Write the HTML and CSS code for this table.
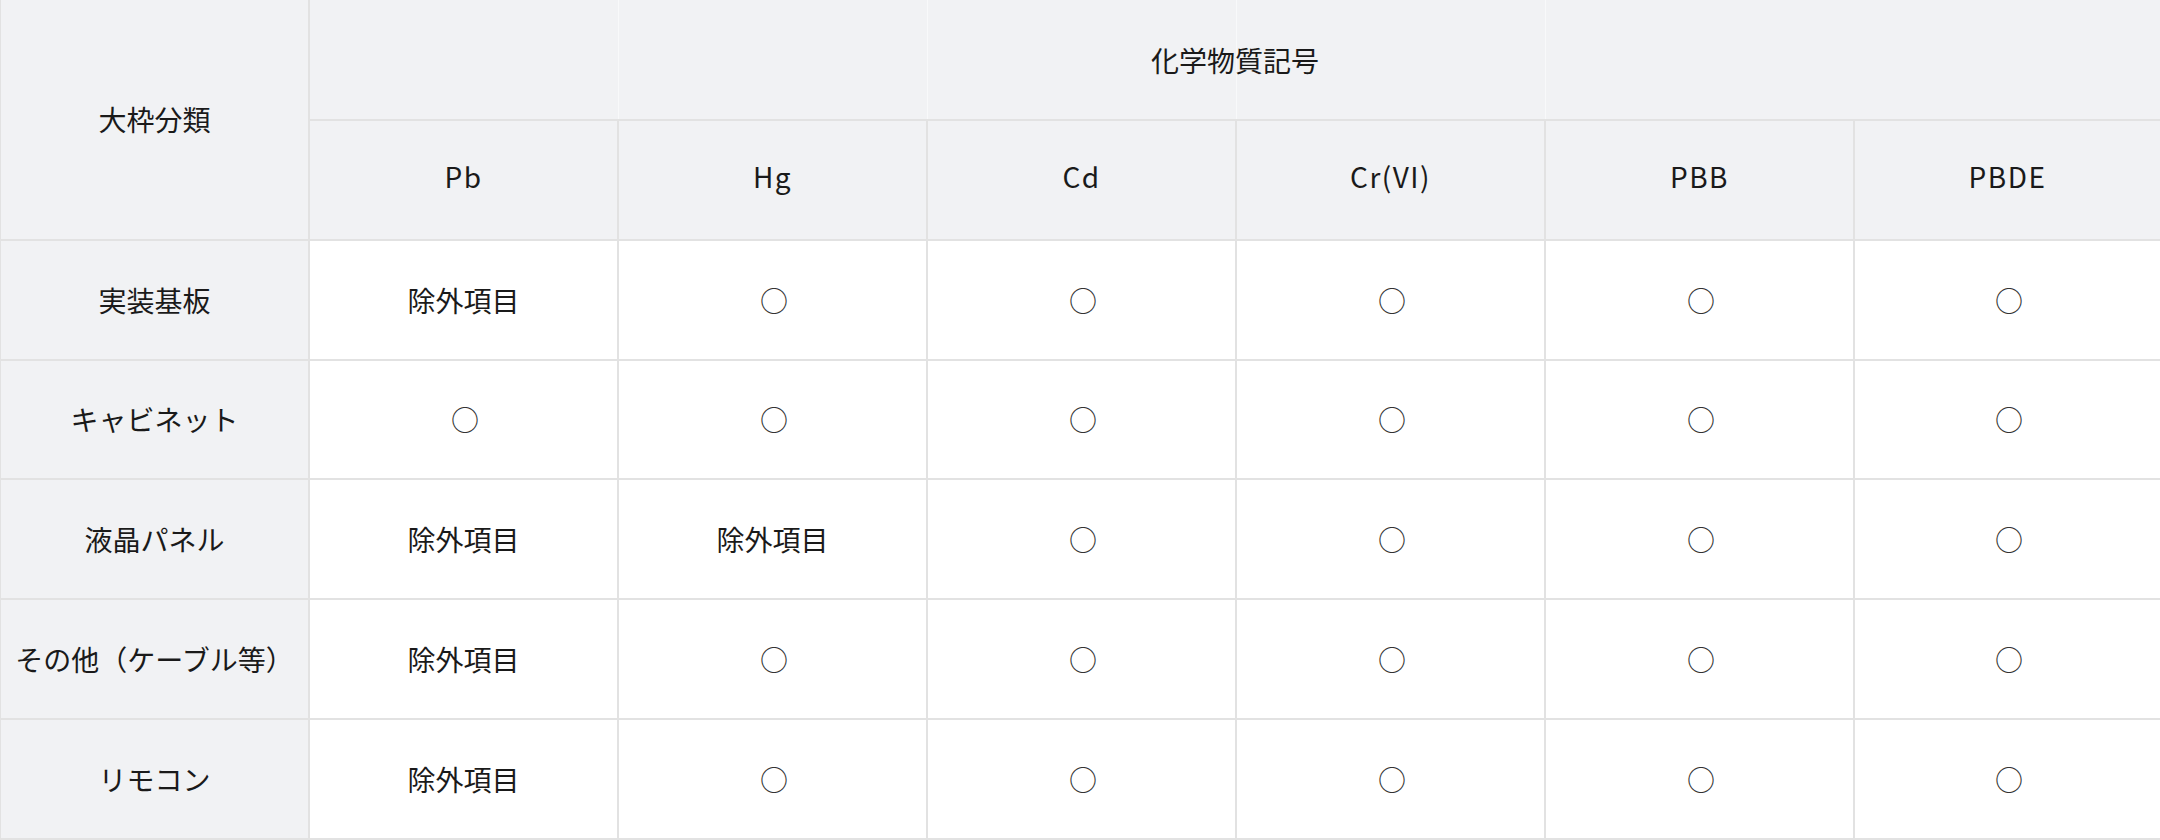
FILE: index.html
```html
<!DOCTYPE html>
<html lang="ja">
<head>
<meta charset="utf-8">
<title>化学物質記号</title>
<link rel="stylesheet" href="styles.css">
</head>
<body>
<div class="table">
  <div class="cell head corner">大枠分類</div>
  <div class="cell head group">化学物質記号</div>
  <div class="cell head sym">Pb</div>
  <div class="cell head sym">Hg</div>
  <div class="cell head sym">Cd</div>
  <div class="cell head sym">Cr(VI)</div>
  <div class="cell head sym">PBB</div>
  <div class="cell head sym last">PBDE</div>

  <div class="cell head rowhead">実装基板</div>
  <div class="cell">除外項目</div>
  <div class="cell mark">○</div>
  <div class="cell mark">○</div>
  <div class="cell mark">○</div>
  <div class="cell mark">○</div>
  <div class="cell mark last">○</div>

  <div class="cell head rowhead">キャビネット</div>
  <div class="cell mark">○</div>
  <div class="cell mark">○</div>
  <div class="cell mark">○</div>
  <div class="cell mark">○</div>
  <div class="cell mark">○</div>
  <div class="cell mark last">○</div>

  <div class="cell head rowhead">液晶パネル</div>
  <div class="cell">除外項目</div>
  <div class="cell">除外項目</div>
  <div class="cell mark">○</div>
  <div class="cell mark">○</div>
  <div class="cell mark">○</div>
  <div class="cell mark last">○</div>

  <div class="cell head rowhead">その他（ケーブル等）</div>
  <div class="cell">除外項目</div>
  <div class="cell mark">○</div>
  <div class="cell mark">○</div>
  <div class="cell mark">○</div>
  <div class="cell mark">○</div>
  <div class="cell mark last">○</div>

  <div class="cell head rowhead">リモコン</div>
  <div class="cell">除外項目</div>
  <div class="cell mark">○</div>
  <div class="cell mark">○</div>
  <div class="cell mark">○</div>
  <div class="cell mark">○</div>
  <div class="cell mark last">○</div>
</div>
</body>
</html>
```

FILE: styles.css
```css
html, body {
  margin: 0;
  padding: 0;
  background: #ffffff;
}

body {
  font-family: "Noto Sans CJK JP", "Noto Sans", sans-serif;
  color: #1a1a1a;
  overflow: hidden;
}

.table {
  display: grid;
  grid-template-columns: repeat(6, 309px) 1fr;
  grid-template-rows: 121px repeat(6, 119.8px);
  width: 2160px;
  border-left: 1px solid #e2e2e2;
  box-sizing: border-box;
}

.cell {
  display: flex;
  align-items: center;
  justify-content: center;
  box-sizing: border-box;
  border-right: 2px solid #e2e2e2;
  border-bottom: 2px solid #e2e2e2;
  font-size: 28px;
  letter-spacing: 0;
  line-height: 1;
  background: #ffffff;
  white-space: nowrap;
}

.cell.last {
  border-right: none;
}

.head {
  background: #f1f2f4;
}

.corner {
  grid-row: span 2;
}

.group {
  grid-column: span 6;
  border-right: none;
  background-color: #f1f2f4;
  background-image:
    linear-gradient(#f8f9fa, #f8f9fa),
    linear-gradient(#f8f9fa, #f8f9fa),
    linear-gradient(#f8f9fa, #f8f9fa),
    linear-gradient(#f8f9fa, #f8f9fa);
  background-size: 1px 100%;
  background-repeat: no-repeat;
  background-position: 308px 0, 617px 0, 926px 0, 1235px 0;
}

.sym {
  letter-spacing: 1.5px;
  padding-bottom: 7px;
}

.mark {
  color: #333333;
  padding-left: 3px;
}
```
